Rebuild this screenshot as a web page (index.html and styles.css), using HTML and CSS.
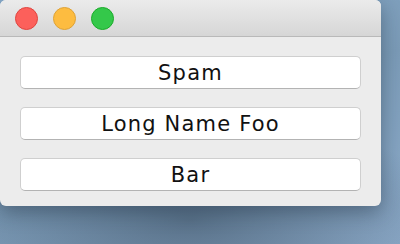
FILE: index.html
```html
<!DOCTYPE html>
<html>
<head>
<meta charset="utf-8">
<link rel="stylesheet" href="styles.css">
</head>
<body>
<div class="window">
  <div class="titlebar">
    <span class="light red"></span>
    <span class="light yellow"></span>
    <span class="light green"></span>
  </div>
  <div class="content">
    <button class="btn">Spam</button>
    <button class="btn">Long Name Foo</button>
    <button class="btn">Bar</button>
  </div>
</div>
</body>
</html>
```

FILE: styles.css
```css
html, body {
  margin: 0;
  padding: 0;
}
body {
  width: 400px;
  height: 244px;
  overflow: hidden;
  background:
    radial-gradient(ellipse 260px 110px at 190px 220px, rgba(60, 80, 100, 0.6), rgba(60, 80, 100, 0) 100%),
    linear-gradient(160deg, #88abcb 0%, #7b9bb7 50%, #8eaccb 100%);
}
.window {
  width: 381px;
  height: 206px;
  background: #ececec;
  border-radius: 6px;
  overflow: hidden;
  display: flex;
  flex-direction: column;
  box-shadow: 0 6px 20px rgba(20, 35, 50, 0.4);
}
.titlebar {
  height: 35px;
  border-bottom: 1px solid #b9b9b9;
  background: linear-gradient(#ebebeb, #d6d6d6);
  display: flex;
  align-items: center;
  gap: 15px;
  padding-left: 15px;
  padding-top: 1px;
  box-sizing: content-box;
}
.light {
  width: 21px;
  height: 21px;
  border-radius: 50%;
  border: 1px solid;
}
.red { background: #fc605b; border-color: #e0443e; }
.yellow { background: #fdbc40; border-color: #dea236; }
.green { background: #34c84a; border-color: #1aab29; }
.content {
  display: flex;
  flex-direction: column;
  gap: 18px;
  padding: 19px 0 0 20px;
}
.btn {
  width: 341px;
  height: 33px;
  box-sizing: border-box;
  background: #ffffff;
  border: 1px solid #cfcfcf;
  border-bottom-color: #b3b3b3;
  border-radius: 5px;
  font-family: "DejaVu Sans", sans-serif;
  font-size: 21px;
  letter-spacing: 1.2px;
  color: #111;
  padding: 0;
  line-height: 30px;
  text-align: center;
}
```
